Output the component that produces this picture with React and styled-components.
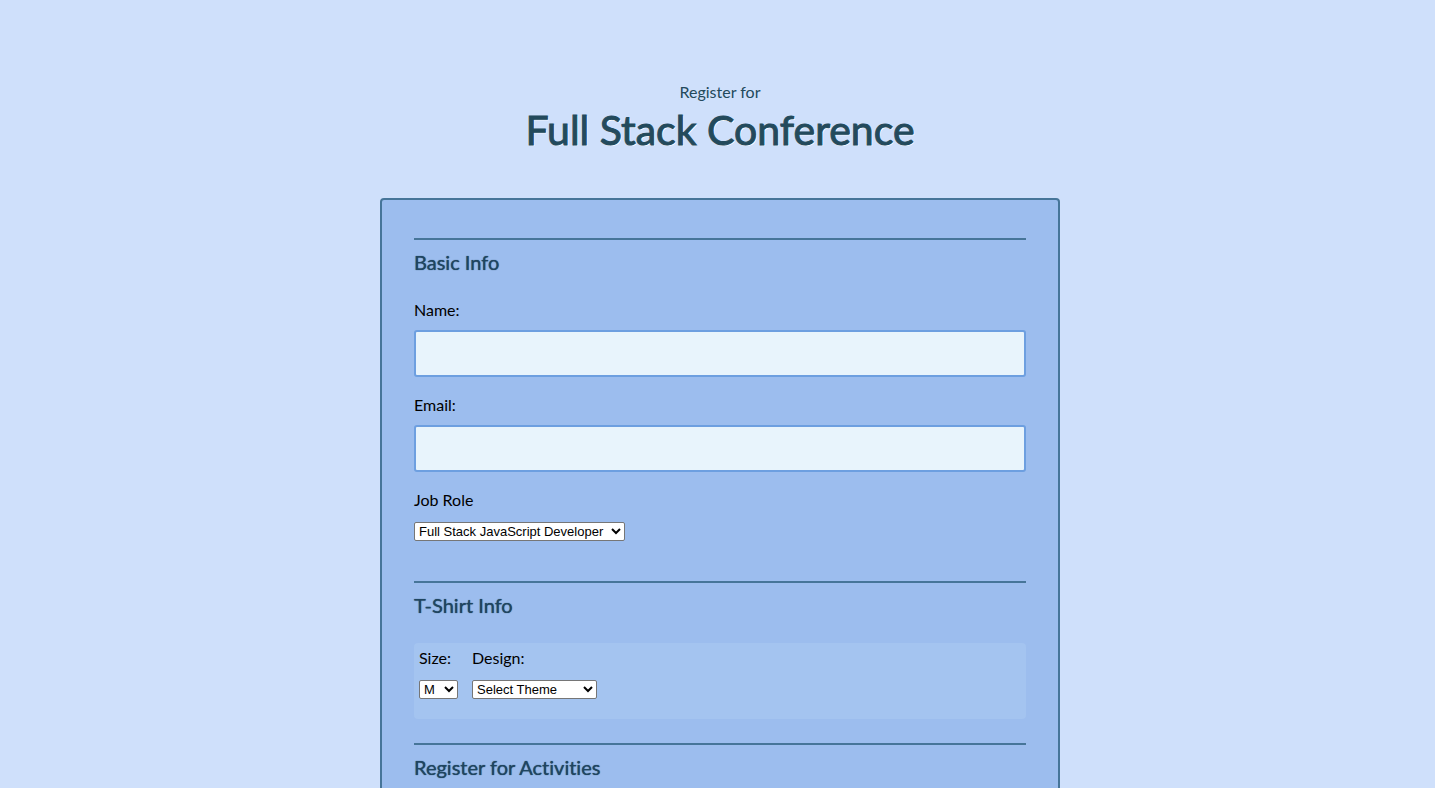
import React from "react";
import styled, { createGlobalStyle } from "styled-components";

const GlobalStyle = createGlobalStyle`
  * { box-sizing: border-box; }
  html { background: #cfe0fb; }
  body {
    margin: 0;
    overflow-x: hidden;
    color: #000;
    font-family: Lato, "Open Sans", sans-serif;
    font-size: 16px;
    font-variant-ligatures: none;
    line-height: 24px;
  }
`;

const Page = styled.div`
  display: flex;
  flex-direction: column;
  align-items: center;
  padding: 80px 0 48px 5px;
`;

const Header = styled.header`
  margin-bottom: 42px;
  color: #234a5c;
  text-align: center;
`;

const Intro = styled.span`
  display: block;
`;

const Title = styled.h1`
  margin: 0;
  font-size: 41px;
  font-weight: 400;
  line-height: 52px;
  -webkit-text-stroke: 1px #234a5c;
  text-shadow: 1px 1px 0 #fff;
`;

const Form = styled.form`
  width: 100%;
  max-width: 680px;
  padding: 38px 32px;
  background: #9cbdee;
  border: 2px solid #467599;
  border-radius: 4px;
`;

const Section = styled.section`
  padding: 6px 0 ${(p) => p.$bottom}px;
  border-top: 2px solid #467599;
`;

const SectionTitle = styled.h2`
  margin: 0 0 ${(p) => p.$gap}px;
  color: #1f4560;
  font-size: 20px;
  font-weight: 400;
  line-height: 32px;
  text-shadow: 0 0 1px #1f4560;
`;

const Fields = styled.div`
  display: flex;
  flex-direction: column;
  gap: 16px;
`;

const Field = styled.div`
  display: flex;
  flex-direction: column;
  align-items: flex-start;
  gap: ${(p) => p.$gap}px;
`;

const TextInput = styled.input`
  width: 100%;
  height: 47px;
  padding: 8px 12px;
  font: inherit;
  background: #e8f4fc;
  border: 2px solid #6d9fe0;
  border-radius: 3px;
`;

const Select = styled.select`
  width: ${(p) => p.$width}px;
  max-width: 100%;
  height: 19px;
  margin: 0;
  padding: 0;
  color: #000;
  font-family: "Liberation Sans", Arial, sans-serif;
  font-size: 13px;
  background: #fff;
  border: 1px solid #767676;
  border-radius: 2px;
`;

const ShirtBox = styled.div`
  display: flex;
  flex-wrap: wrap;
  gap: 14px;
  padding: 3px 5px 20px;
  background: #a4c4f0;
  border-radius: 4px;
`;

export default function App() {
  return (
    <>
      <GlobalStyle />
      <Page>
        <Header>
          <Intro>Register for</Intro>
          <Title>Full Stack Conference</Title>
        </Header>
        <Form>
          <Section $bottom={40}>
            <SectionTitle $gap={20}>Basic Info</SectionTitle>
            <Fields>
              <Field $gap={8}>
                <label htmlFor="name">Name:</label>
                <TextInput id="name" type="text" />
              </Field>
              <Field $gap={8}>
                <label htmlFor="email">Email:</label>
                <TextInput id="email" type="email" />
              </Field>
              <Field $gap={10}>
                <label htmlFor="role">Job Role</label>
                <Select id="role" $width={211}>
                  <option>Full Stack JavaScript Developer</option>
                </Select>
              </Field>
            </Fields>
          </Section>
          <Section $bottom={24}>
            <SectionTitle $gap={22}>T-Shirt Info</SectionTitle>
            <ShirtBox>
              <Field $gap={10}>
                <label htmlFor="size">Size:</label>
                <Select id="size" $width={39}>
                  <option>M</option>
                </Select>
              </Field>
              <Field $gap={10}>
                <label htmlFor="design">Design:</label>
                <Select id="design" $width={125}>
                  <option>Select Theme</option>
                </Select>
              </Field>
            </ShirtBox>
          </Section>
          <Section $bottom={24}>
            <SectionTitle $gap={22}>Register for Activities</SectionTitle>
          </Section>
        </Form>
      </Page>
    </>
  );
}
